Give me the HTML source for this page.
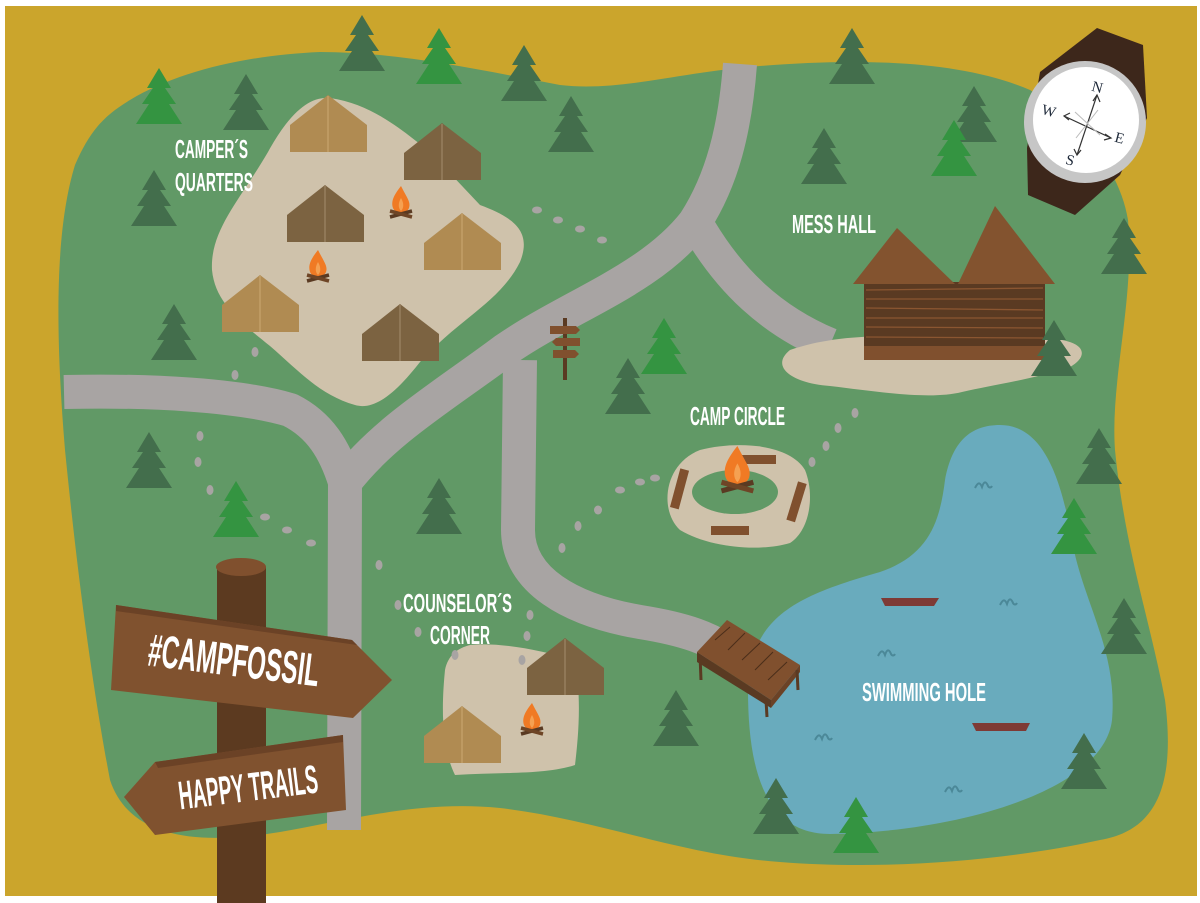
<!DOCTYPE html>
<html><head><meta charset="utf-8"><style>
html,body{margin:0;padding:0;background:#fff}
svg{display:block}
.lbl{font-family:"Liberation Sans Narrow","Liberation Sans",sans-serif;font-weight:bold;fill:#fff}
</style></head><body>
<svg width="1200" height="903" viewBox="0 0 1200 903" xmlns="http://www.w3.org/2000/svg">
<defs>
<polygon id="tr" points="24,0 36,20 30,20 41,36 34,36 47,56 1,56 14,36 7,36 18,20 12,20"/>
<g id="tentL"><polygon points="0,57 0,30 38,0 77,30 77,57" fill="#B08B52"/><line x1="38" y1="1" x2="38" y2="57" stroke="#C39F68" stroke-width="1.5"/></g>
<g id="tentD"><polygon points="0,57 0,30 38,0 77,30 77,57" fill="#7C6341"/><line x1="38" y1="1" x2="38" y2="57" stroke="#96805F" stroke-width="1.5"/></g>
<g id="fire"><path d="M12,0 C4,10 2,16 4,22 C6,28 18,28 20,22 C22,16 18,12 12,0Z" fill="#F07A24"/><path d="M12,12 C9,17 9,22 12,25 C15,22 15,17 12,12Z" fill="#F5A152"/><line x1="1" y1="31" x2="23" y2="25" stroke="#5A3A22" stroke-width="3.5"/><line x1="1" y1="25" x2="23" y2="31" stroke="#6E4526" stroke-width="3.5"/></g>
<path id="wv" d="M0,8 C3,2 5,2 7,7 C9,1 11,1 13,6 C14,8 16,8 17,6" fill="none" stroke="#4B8898" stroke-width="2"/>
</defs>
<rect x="0" y="0" width="1200" height="903" fill="#fff"/>
<rect x="5" y="6" width="1192" height="890" fill="#CBA52C"/>
<path d="M130,100 C180,70 250,55 320,52 C400,52 480,70 560,85 C620,92 680,72 760,66 C860,58 960,60 1030,90 C1080,120 1120,170 1128,220 C1135,300 1110,380 1115,450 C1125,550 1150,620 1165,700 C1175,780 1160,830 1100,840 C1000,862 880,870 780,862 C680,855 600,820 500,808 C420,800 350,820 280,832 C200,845 130,840 110,780 C95,700 80,600 65,450 C55,330 55,230 75,165 C90,130 105,115 130,100Z" fill="#619966"/>
<path d="M1000,425 C1040,425 1060,470 1072,540 C1082,600 1118,650 1112,720 C1104,790 960,832 830,834 C765,834 748,770 748,690 C750,615 800,595 880,572 C930,555 940,520 945,480 C952,442 970,425 1000,425Z" fill="#69ABBD"/>
<g fill="none" stroke="#A8A4A3" stroke-width="34" stroke-linejoin="round">
<path d="M740,64 C735,130 722,180 695,222 C650,280 570,305 505,350 C445,395 385,430 345,482 L344,830"/>
<path d="M700,230 C730,280 770,320 830,345"/>
<path d="M64,392 C150,390 240,395 290,410 C320,425 335,450 345,482"/>
<path d="M520,360 L518,530 C518,580 570,610 640,622 C690,630 710,640 722,648"/>
</g>
<g fill="#CFC2AB">
<path d="M330,98 C372,104 402,130 430,152 L480,205 C515,218 532,232 520,262 C500,302 460,318 420,362 C392,398 372,410 355,405 C320,395 300,372 270,346 C240,322 215,302 212,270 C210,230 240,200 268,152 C290,112 310,96 330,98Z"/>
<path d="M790,350 C820,340 850,336 900,336 L1062,340 C1088,345 1086,358 1070,367 C1030,380 992,385 962,392 C930,400 880,392 830,386 C790,383 770,366 790,350Z"/>
<path d="M700,450 C740,440 790,445 805,470 C815,495 810,530 790,543 C760,552 710,548 680,530 C660,512 662,465 700,450Z"/>
<path d="M470,645 C500,642 540,650 575,660 C582,700 578,740 575,765 C545,775 500,772 455,775 C440,745 442,700 445,670 C448,655 458,648 470,645Z"/>
</g>
<ellipse cx="735" cy="492" rx="43" ry="22" fill="#619966"/>
<g fill="#80502E"><rect x="742" y="455" width="34" height="9"/><rect x="711" y="526" width="38" height="9"/><rect x="-5" y="-20" width="9" height="40" transform="translate(680,489) rotate(15)"/><rect x="-5" y="-20" width="9" height="40" transform="translate(797,502) rotate(17)"/></g>
<g fill="#A8A4A3">
<ellipse cx="537" cy="210" rx="5" ry="3.5"/><ellipse cx="558" cy="220" rx="5" ry="3.5"/><ellipse cx="580" cy="229" rx="5" ry="3.5"/><ellipse cx="602" cy="240" rx="5" ry="3.5"/>
<ellipse cx="255" cy="352" rx="3.5" ry="5"/><ellipse cx="235" cy="375" rx="3.5" ry="5"/>
<ellipse cx="200" cy="436" rx="3.5" ry="5"/><ellipse cx="198" cy="462" rx="3.5" ry="5"/><ellipse cx="210" cy="490" rx="3.5" ry="5"/><ellipse cx="265" cy="517" rx="5" ry="3.5"/><ellipse cx="287" cy="530" rx="5" ry="3.5"/><ellipse cx="311" cy="543" rx="5" ry="3.5"/>
<ellipse cx="379" cy="565" rx="3.5" ry="5"/><ellipse cx="398" cy="605" rx="3.5" ry="5"/><ellipse cx="418" cy="632" rx="3.5" ry="5"/><ellipse cx="455" cy="655" rx="3.5" ry="5"/>
<ellipse cx="530" cy="615" rx="3.5" ry="5"/><ellipse cx="527" cy="636" rx="3.5" ry="5"/><ellipse cx="522" cy="660" rx="3.5" ry="5"/>
<ellipse cx="562" cy="548" rx="3.5" ry="5"/><ellipse cx="578" cy="526" rx="3.5" ry="5"/><ellipse cx="598" cy="510" rx="4" ry="4.5"/><ellipse cx="620" cy="490" rx="5" ry="3.5"/><ellipse cx="640" cy="482" rx="5" ry="3.5"/><ellipse cx="655" cy="478" rx="5" ry="3.5"/>
<ellipse cx="812" cy="462" rx="3.5" ry="5"/><ellipse cx="826" cy="446" rx="3.5" ry="5"/><ellipse cx="838" cy="428" rx="3.5" ry="5"/><ellipse cx="855" cy="413" rx="3.5" ry="5"/>
</g>
<use href="#tentL" x="290" y="95"/><use href="#tentD" x="404" y="123"/><use href="#tentD" x="287" y="185"/><use href="#tentL" x="424" y="213"/><use href="#tentL" x="222" y="275"/><use href="#tentD" x="362" y="304"/><use href="#tentD" x="527" y="638"/><use href="#tentL" x="424" y="706"/>
<use href="#fire" x="389" y="186"/><use href="#fire" x="306" y="250"/><use href="#fire" x="520" y="703"/>
<g transform="translate(720,446) scale(1.45)"><use href="#fire"/></g>
<rect x="864" y="282" width="181" height="78" fill="#5A3A22"/>
<rect x="864" y="346" width="181" height="14" fill="#80502E"/>
<g stroke="#8B5631" stroke-width="1.3"><line x1="866" y1="290" x2="1043" y2="288"/><line x1="866" y1="299" x2="1043" y2="299"/><line x1="866" y1="308" x2="1043" y2="310"/><line x1="866" y1="318" x2="1043" y2="318"/><line x1="866" y1="327" x2="1043" y2="328"/><line x1="866" y1="337" x2="1043" y2="338"/></g>
<polygon points="853,284 897,228 955,284" fill="#83532F"/>
<polygon points="958,284 995,206 1055,284" fill="#83532F"/>
<polygon points="697,652 727,620 800,665 771,700" fill="#80502E"/>
<polygon points="697,652 771,700 771,708 697,662" fill="#5A3A22"/>
<polygon points="771,700 800,665 800,672 771,708" fill="#6B4226"/>
<g stroke="#5A3A22" stroke-width="3"><line x1="700" y1="655" x2="701" y2="680"/><line x1="766" y1="700" x2="767" y2="717"/><line x1="797" y1="670" x2="798" y2="690"/></g>
<g stroke="#4A2E1A" stroke-width="1"><path d="M715,640 L730,627 M728,650 L745,633 M742,660 L760,643 M755,670 L773,652 M768,680 L787,662"/></g>
<path d="M881,598 L939,598 L934,606 L885,606Z" fill="#7E3A35"/>
<path d="M972,723 L1030,723 L1026,731 L976,731Z" fill="#7E3A35"/>
<use href="#wv" x="975" y="480"/><use href="#wv" x="1000" y="597"/><use href="#wv" x="878" y="648"/><use href="#wv" x="815" y="732"/><use href="#wv" x="945" y="784"/>
<rect x="563" y="318" width="4" height="62" fill="#5A3A22"/>
<polygon points="550,326 576,326 580,330 576,334 550,334" fill="#80502E"/>
<polygon points="580,338 556,338 552,342 556,346 580,346" fill="#80502E"/>
<polygon points="553,350 575,350 579,354 575,358 553,358" fill="#80502E"/>
<g fill="#436E4C">
<use href="#tr" x="338" y="15"/><use href="#tr" x="500" y="45"/><use href="#tr" x="547" y="96"/><use href="#tr" x="222" y="74"/><use href="#tr" x="130" y="170"/><use href="#tr" x="150" y="304"/><use href="#tr" x="125" y="432"/><use href="#tr" x="415" y="478"/><use href="#tr" x="604" y="358"/><use href="#tr" x="828" y="28"/><use href="#tr" x="800" y="128"/><use href="#tr" x="950" y="86"/><use href="#tr" x="1100" y="218"/><use href="#tr" x="1030" y="320"/><use href="#tr" x="1075" y="428"/><use href="#tr" x="1100" y="598"/><use href="#tr" x="652" y="690"/><use href="#tr" x="752" y="778"/><use href="#tr" x="1060" y="733"/>
</g>
<g fill="#349441">
<use href="#tr" x="415" y="28"/><use href="#tr" x="135" y="68"/><use href="#tr" x="212" y="481"/><use href="#tr" x="640" y="318"/><use href="#tr" x="930" y="120"/><use href="#tr" x="1050" y="498"/><use href="#tr" x="832" y="797"/>
</g>
<polygon points="1097,28 1143,45 1147,118 1120,175 1075,215 1028,195 1027,148 1040,72" fill="#3D271B"/>
<circle cx="1085" cy="122" r="61" fill="#C6C6C6"/>
<circle cx="1086" cy="120" r="53" fill="#fff"/>
<g stroke="#333" stroke-width="1.2" fill="none">
<line x1="1097" y1="95" x2="1077" y2="155"/><line x1="1064" y1="116" x2="1111" y2="138"/>
<path d="M1093,101 L1097,95 L1100,102 M1074,149 L1077,155 L1081,150 M1070,113 L1064,116 L1069,120 M1105,134 L1111,138 L1104,140"/>
</g>
<g stroke="#bbb" stroke-width="1"><line x1="1075" y1="112" x2="1100" y2="135"/><line x1="1098" y1="110" x2="1076" y2="138"/></g>
<g font-family="Liberation Serif,serif" font-size="15" fill="#1f2a3a">
<text x="1092" y="92" transform="rotate(15 1097 87)">N</text><text x="1042" y="116" transform="rotate(15 1050 110)">W</text><text x="1115" y="143" transform="rotate(15 1120 138)">E</text><text x="1066" y="165" transform="rotate(15 1070 160)">S</text>
</g>
<rect x="217" y="567" width="49" height="336" fill="#5C3A20"/>
<ellipse cx="241" cy="567" rx="25" ry="9" fill="#80502E"/>
<polygon points="116,605 352,640 392,680 353,718 111,690" fill="#80522F"/>
<polygon points="116,605 352,640 357,645 116,611" fill="#6B4226"/>
<text class="lbl" x="148" y="676" font-size="46" textLength="172" lengthAdjust="spacingAndGlyphs" transform="rotate(7 234 660)">#CAMPFOSSIL</text>
<polygon points="155,762 343,735 346,810 155,835 124,797" fill="#80522F"/>
<polygon points="155,762 343,735 343,742 158,768" fill="#6B4226"/>
<text class="lbl" x="178" y="801" font-size="40" textLength="140" lengthAdjust="spacingAndGlyphs" transform="rotate(-7 248 786)">HAPPY TRAILS</text>
<g class="lbl" font-size="26">
<text x="175" y="158" textLength="73" lengthAdjust="spacingAndGlyphs">CAMPER´S</text>
<text x="175" y="191" textLength="78" lengthAdjust="spacingAndGlyphs">QUARTERS</text>
<text x="792" y="233" textLength="84" lengthAdjust="spacingAndGlyphs">MESS HALL</text>
<text x="690" y="425" textLength="95" lengthAdjust="spacingAndGlyphs">CAMP CIRCLE</text>
<text x="403" y="612" textLength="109" lengthAdjust="spacingAndGlyphs">COUNSELOR´S</text>
<text x="430" y="644" textLength="60" lengthAdjust="spacingAndGlyphs">CORNER</text>
<text x="862" y="701" textLength="124" lengthAdjust="spacingAndGlyphs">SWIMMING HOLE</text>
</g>
</svg>
</body></html>
